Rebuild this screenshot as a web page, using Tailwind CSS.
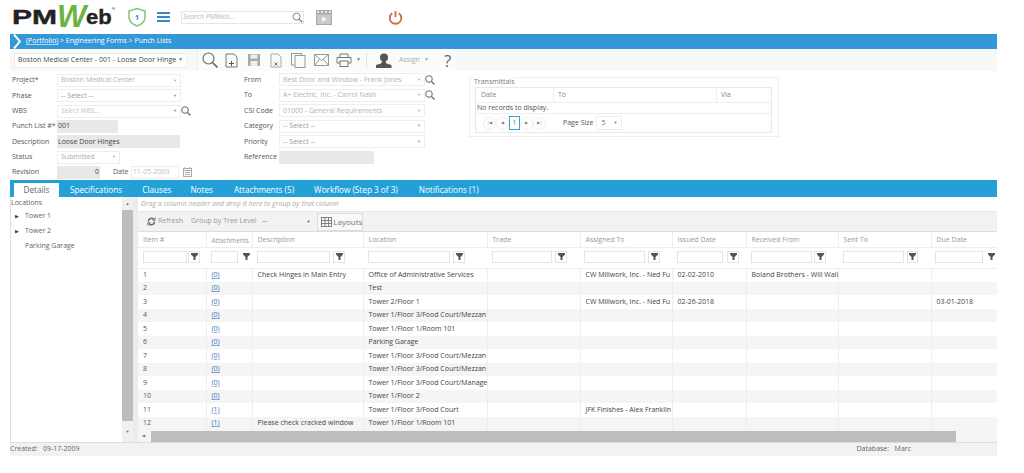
<!DOCTYPE html>
<html><head><meta charset="utf-8"><script src="https://cdn.jsdelivr.net/npm/@tailwindcss/browser@4"></script></head>
<body class="bg-white overflow-hidden font-['Open_Sans',sans-serif] text-[7px] text-[#555]">
<div class="w-[1024px] h-[473px] overflow-hidden">
<header class="h-[34px] flex items-center">
  <div class="ml-[12px] w-[100px] h-[24px] flex items-center font-['Liberation_Sans',sans-serif] font-bold text-[#222] leading-none relative whitespace-nowrap">
    <span class="text-[20px] scale-x-[1.5] origin-left w-[45px] shrink-0 [-webkit-text-stroke:0.4px_#222]">PM</span><span class="text-[31px] italic text-[#6cb33f] shrink-0 -mt-[1px]">W</span><span class="text-[20px] scale-x-[1.1] origin-left w-[26px] shrink-0 [-webkit-text-stroke:0.4px_#222]">eb</span><span class="absolute left-[100px] top-[2px] text-[4px]">®</span>
  </div>
  <svg class="ml-[15px] w-[20px] h-[20px]" viewBox="0 0 20 20"><path d="M10 1.5 L18 4 V10 C18 14.5 14 17.5 10 19 C6 17.5 2 14.5 2 10 V4 Z" fill="#fff" stroke="#7fc576" stroke-width="1.5"/><text x="10" y="12.5" text-anchor="middle" font-size="7" font-weight="700" fill="#2e86c8" font-family="Open Sans">1</text></svg>
  <div class="ml-[10px] w-[13px] flex flex-col gap-[2px]"><i class="block h-[2px] bg-[#3b87c8]"></i><i class="block h-[2px] bg-[#3b87c8]"></i><i class="block h-[2px] bg-[#3b87c8]"></i></div>
  <div class="ml-[11px] w-[123px] h-[13px] border border-[#e6e6e6] flex items-center pl-[1px] pr-[0px] justify-between italic text-[#b8b8b8]">Search PMWeb...
    <svg class="w-[11px] h-[11px]" viewBox="0 0 12 12" fill="none" stroke="#777" stroke-width="1"><circle cx="5" cy="5" r="3.8"/><path d="M8 8l3.2 3.2" stroke-width="1.4"/></svg>
  </div>
  <svg class="ml-[12px] w-[16px] h-[15px]" viewBox="0 0 16 15"><rect width="16" height="15" fill="#a9a9a9"/><path d="M1 1h2v2H1zM5 1h2v2H5zM9 1h2v2H9zM13 1h2v2h-2z" fill="#e8e8e8"/><rect x="1" y="4.5" width="14" height="9.5" fill="#c9c9c9"/><path d="M6 6.5l5 2.8-5 2.8z" fill="#f4f4f4"/></svg>
  <svg class="ml-[56px] w-[15px] h-[15px]" viewBox="0 0 15 15" fill="none" stroke="#cf6a4c" stroke-width="1.8"><path d="M4.2 3.2a5.8 5.8 0 1 0 6.6 0"/><path d="M7.5 1v6"/></svg>
</header>
<main class="ml-[10px] w-[987px]">
  <div class="h-[15px] bg-[#3498d8] flex items-center text-white font-medium text-[7px]">
    <svg class="ml-[3px] w-[8px] h-[15px]" viewBox="0 0 8 15" fill="none" stroke="#fff" stroke-width="2"><path d="M1 0.5l6 7-6 7"/></svg>
    <span class="ml-[5px]"><span class="underline decoration-white/60">(Portfolio)</span> &gt; Engineering Forms &gt; Punch Lists</span>
  </div>
  <div class="h-[22px] bg-[#f8f8f8] flex items-center">
    <div class="ml-[4px] w-[173px] h-[15px] bg-white border border-[#eeeeee] flex items-center pl-[3px] text-[#444] whitespace-nowrap justify-between"><span class="tracking-[0.05px]">Boston Medical Center - 001 - Loose Door Hinge</span><span class="mr-[3px] text-[#777] text-[5px]">▼</span></div>
    <div class="ml-[10px] w-[261px] h-[22px] bg-[#fbfbfb] border-x border-[#f0f0f0] flex items-center text-[#aaa]">
      <svg class="ml-[4px] w-[16px] h-[16px]" viewBox="0 0 16 16" fill="none" stroke="#666" stroke-width="1.1"><circle cx="6.5" cy="6.5" r="5.5"/><path d="M10.5 10.5l5 5" stroke-width="1.6"/></svg>
      <svg class="ml-[7px] w-[13px] h-[15px]" viewBox="0 0 13 15" fill="none" stroke="#777"><path d="M1 1h8l3 3v10H1z"/><path d="M6.5 8v5M4 10.5h5" stroke="#555"/></svg>
      <svg class="ml-[9px] w-[14px] h-[14px]" viewBox="0 0 14 14" fill="#aaa"><path d="M1 1h12v12H1z"/><path d="M3.5 1.5h7v4h-7zM3.5 8h7v5h-7z" fill="#eee"/></svg>
      <svg class="ml-[9px] w-[12px] h-[15px]" viewBox="0 0 12 15" fill="none" stroke="#aaa"><path d="M1 1h7l3 3v10H1z"/><path d="M4.5 9.5l3 3m0-3l-3 3" stroke="#777"/></svg>
      <svg class="ml-[9px] w-[15px] h-[15px]" viewBox="0 0 15 15" fill="#fbfbfb" stroke="#999"><rect x="0.5" y="0.5" width="10" height="11.5"/><rect x="4" y="2.5" width="10" height="12"/></svg>
      <svg class="ml-[8px] w-[15px] h-[12px]" viewBox="0 0 15 12" fill="none" stroke="#999"><rect x="0.5" y="0.5" width="14" height="11"/><path d="M0.5 0.5l7 6 7-6M0.5 11.5l5-6.2M14.5 11.5l-5-6.2"/></svg>
      <svg class="ml-[7px] w-[16px] h-[14px]" viewBox="0 0 16 14" fill="none" stroke="#777"><path d="M4 4V1h8v3M4 10H1V4.5h14V10h-3"/><rect x="4" y="8" width="8" height="5.5"/></svg>
      <span class="ml-[4px] text-[#777] text-[5px]">▼</span>
      <i class="ml-[5px] block w-px h-[16px] bg-[#e4e4e4]"></i>
      <svg class="ml-[9px] w-[16px] h-[15px]" viewBox="0 0 16 15" fill="#555"><circle cx="8" cy="4.5" r="4"/><path d="M6.5 8h3l1 2.5 5 1.5v3H0v-3l5-1.5z"/></svg>
      <span class="ml-[7px]">Assign</span><span class="ml-[4px] text-[5px]">▼</span>
      <span class="ml-[15px] text-[17px] leading-none text-[#666]">?</span>
    </div>
  </div>
  <section class="h-[109px] flex relative">
    <div class="w-[234px] pt-[2px] text-[#555]">
      <div class="h-[15.3px] flex items-center pl-[2px]"><span class="w-[45px]">Project*</span><div class="w-[124px] h-[13px] border border-[#eeeeee] flex justify-between items-center pl-[3px] pr-[3px] text-[#b3b3b3]">Boston Medical Center<span class="text-[4px]">▼</span></div></div>
      <div class="h-[15.3px] flex items-center pl-[2px]"><span class="w-[45px]">Phase</span><div class="w-[124px] h-[13px] border border-[#eeeeee] flex justify-between items-center pl-[3px] pr-[3px] text-[#999]">-- Select --<span class="text-[4px]">▼</span></div></div>
      <div class="h-[15.3px] flex items-center pl-[2px]"><span class="w-[45px]">WBS</span><div class="w-[124px] h-[13px] border border-[#eeeeee] flex justify-between items-center pl-[3px] pr-[3px] text-[#c4c4c4] italic">Select WBS...<span class="text-[4px] not-italic text-[#888]">▼</span></div>
        <svg class="w-[10px] h-[10px]" viewBox="0 0 10 10" fill="none" stroke="#666"><circle cx="4" cy="4" r="3.3"/><path d="M6.5 6.5l3 3" stroke-width="1.3"/></svg></div>
      <div class="h-[15.3px] flex items-center pl-[2px]"><span class="w-[45px]">Punch List #*</span><div class="w-[61px] h-[13px] bg-[#e8e8e8] pl-[1px] flex items-center text-[#444]">001</div></div>
      <div class="h-[15.3px] flex items-center pl-[2px]"><span class="w-[45px]">Description</span><div class="w-[123px] h-[13px] bg-[#e8e8e8] pl-[1px] flex items-center text-[#444]">Loose Door Hinges</div></div>
      <div class="h-[15.3px] flex items-center pl-[2px]"><span class="w-[45px]">Status</span><div class="w-[63px] h-[13px] border border-[#eeeeee] flex justify-between items-center pl-[3px] pr-[3px] text-[#aaa]">Submitted<span class="text-[4px]">▼</span></div></div>
      <div class="h-[15.3px] flex items-center pl-[2px]"><span class="w-[45px]">Revision</span><div class="w-[43px] h-[13px] bg-[#e8e8e8] pr-[1px] flex items-center justify-end text-[#444]">0</div><span class="ml-[13px] w-[18px]">Date</span><div class="w-[48px] h-[13px] border border-[#eeeeee] pl-[1px] flex items-center text-[#c0c0c0]">11-05-2009</div>
        <svg class="ml-[4px] w-[9px] h-[10px]" viewBox="0 0 9 10" fill="none" stroke="#aaa"><rect x="0.5" y="1.5" width="8" height="8"/><path d="M0.5 3.5h8M2 0v2M7 0v2M2 5.5h5M2 7.5h5" /></svg></div>
    </div>
    <div class="w-[225px] pt-[1px] text-[#555]">
      <div class="h-[15.5px] flex items-center"><span class="w-[35px]">From</span><div class="w-[146px] h-[13px] border border-[#eeeeee] flex justify-between items-center pl-[3px] pr-[3px] text-[#b3b3b3]">Best Door and Window - Frank Jones<span class="text-[4px]">▼</span></div>
        <svg class="w-[10px] h-[10px]" viewBox="0 0 10 10" fill="none" stroke="#666"><circle cx="4" cy="4" r="3.3"/><path d="M6.5 6.5l3 3" stroke-width="1.3"/></svg></div>
      <div class="h-[15.5px] flex items-center"><span class="w-[35px]">To</span><div class="w-[146px] h-[13px] border border-[#eeeeee] flex justify-between items-center pl-[3px] pr-[3px] text-[#b3b3b3]">A+ Electric, Inc. - Carrol Nash<span class="text-[4px]">▼</span></div>
        <svg class="w-[10px] h-[10px]" viewBox="0 0 10 10" fill="none" stroke="#666"><circle cx="4" cy="4" r="3.3"/><path d="M6.5 6.5l3 3" stroke-width="1.3"/></svg></div>
      <div class="h-[15.5px] flex items-center"><span class="w-[35px]">CSI Code</span><div class="w-[146px] h-[13px] border border-[#eeeeee] flex justify-between items-center pl-[3px] pr-[3px] text-[#b3b3b3]">01000 - General Requirements<span class="text-[4px]">▼</span></div></div>
      <div class="h-[15.5px] flex items-center"><span class="w-[35px]">Category</span><div class="w-[146px] h-[13px] border border-[#eeeeee] flex justify-between items-center pl-[3px] pr-[3px] text-[#999]">-- Select --<span class="text-[4px]">▼</span></div></div>
      <div class="h-[15.5px] flex items-center"><span class="w-[35px]">Priority</span><div class="w-[146px] h-[13px] border border-[#eeeeee] flex justify-between items-center pl-[3px] pr-[3px] text-[#999]">-- Select --<span class="text-[4px]">▼</span></div></div>
      <div class="h-[15.5px] flex items-center"><span class="w-[35px]">Reference</span><div class="w-[95px] h-[13px] bg-[#e8e8e8]"></div></div>
    </div>
    <div class="mt-[6px] w-[310px] h-[60px] border border-[#eeeeee] relative px-[5px] pt-[9px]">
      <span class="absolute left-[4px] -top-[1px] bg-white text-[#777] leading-[9px]">Transmittals</span>
      <div class="w-[297px] h-[46px] border border-[#e8e8e8] flex flex-col">
        <div class="h-[15px] flex items-center border-b border-[#eeeeee] text-[#888]"><span class="w-[78px] pl-[5px] border-r border-[#eeeeee] leading-[14px]">Date</span><span class="w-[163px] pl-[4px] border-r border-[#eeeeee] leading-[14px]">To</span><span class="pl-[4px]">Via</span></div>
        <div class="h-[11px] flex items-center border-b border-[#eeeeee] pl-[1px]">No records to display.</div>
        <div class="flex-1 flex items-center pl-[7px] text-[#777]">
          <span class="w-[13px] h-[13px] rounded-full border border-[#eeeeee] flex items-center justify-center text-[4px]">|◀</span>
          <span class="w-[13px] h-[13px] rounded-full border border-[#eeeeee] flex items-center justify-center text-[4px]">◀</span>
          <span class="w-[11px] h-[14px] border border-[#3aa0d8] flex items-center justify-center">1</span>
          <span class="w-[13px] h-[13px] rounded-full border border-[#eeeeee] flex items-center justify-center text-[4px]">▶</span>
          <span class="w-[13px] h-[13px] rounded-full border border-[#eeeeee] flex items-center justify-center text-[4px]">▶|</span>
          <span class="ml-[17px] text-[#555]">Page Size</span>
          <div class="ml-[3px] w-[26px] h-[14px] border border-[#eeeeee] flex justify-between items-center px-[4px]">5<span class="text-[4px]">▼</span></div>
        </div>
      </div>
    </div>
  </section>
  <nav class="h-[17px] bg-[#23a0d8] flex items-end text-[8.2px] text-white whitespace-nowrap">
    <span class="ml-[4px] w-[45px] h-[14px] bg-white text-[#666] flex items-center justify-center">Details</span>
    <span class="ml-[11px] h-[14px] flex items-center">Specifications</span>
    <span class="ml-[20px] h-[14px] flex items-center">Clauses</span>
    <span class="ml-[19px] h-[14px] flex items-center">Notes</span>
    <span class="ml-[21px] h-[14px] flex items-center">Attachments (5)</span>
    <span class="ml-[20px] h-[14px] flex items-center">Workflow (Step 3 of 3)</span>
    <span class="ml-[21px] h-[14px] flex items-center">Notifications (1)</span>
  </nav>
  <div class="h-[246px] flex border-b border-[#dddddd]">
    <aside class="w-[112px] border-l border-[#e0e0e0] text-[#666]">
      <div class="h-[12px] pt-[1px] flex items-center">Locations</div>
      <div class="h-[15px] flex items-center pl-[4px]"><span class="text-[5px] w-[10px] text-[#444]">▶</span>Tower 1</div>
      <div class="h-[15px] flex items-center pl-[4px]"><span class="text-[5px] w-[10px] text-[#444]">▶</span>Tower 2</div>
      <div class="h-[15px] flex items-center pl-[14px]">Parking Garage</div>
    </aside>
    <div class="w-[11px] bg-[#f0f0f0] flex flex-col items-center text-[#666] text-[4px]">
      <span class="h-[13px] flex items-center">▲</span>
      <div class="w-full h-[211px] bg-[#bdbdbd]"></div>
      <span class="flex-1 flex items-center">▼</span>
    </div>
    <div class="w-[5px] bg-[#ececec]"></div>
    <div class="w-[859px] overflow-hidden">
      <div class="h-[15px] pt-[1px] flex items-center italic text-[#aaa] pl-[3px] border-b border-[#e8e8e8]">Drag a column header and drop it here to group by that column</div>
      <div class="h-[20px] bg-[#f2f2f2] border-b border-[#dddddd] flex items-center text-[#999]">
        <svg class="ml-[9px] w-[9px] h-[9px]" viewBox="0 0 10 10" fill="none" stroke="#666" stroke-width="1.6"><path d="M1.5 5a3.6 3.6 0 0 1 6.4-2.2M8.5 5a3.6 3.6 0 0 1-6.4 2.2"/><path d="M9 0.5v3H6M1 9.5v-3h3" stroke-width="1"/></svg>
        <span class="ml-[2px]">Refresh</span>
        <span class="ml-[8px] font-medium">Group by Tree Level</span>
        <div class="ml-[2px] w-[55px] h-[14px] flex justify-between items-center pl-[4px] pr-[3px] text-[#555]">--<span class="text-[4px]">▼</span></div>
        <div class="ml-[4px] w-[46px] h-[18px] bg-[#f8f8f8] border border-[#dddddd] flex items-center pl-[3px] text-[8px] text-[#777] self-end">
          <svg class="w-[11px] h-[10px] mr-[1px]" viewBox="0 0 11 10" fill="none" stroke="#666" stroke-width="0.8"><rect x="0.5" y="0.5" width="10" height="9"/><path d="M0.5 3.5h10M0.5 6.5h10M4 0.5v9M7.5 0.5v9"/></svg>Layouts</div>
      </div>
      <table class="table-fixed border-collapse w-[859px] whitespace-nowrap">
        <colgroup><col class="w-[68px]"><col class="w-[46px]"><col class="w-[111px]"><col class="w-[124px]"><col class="w-[93px]"><col class="w-[92px]"><col class="w-[74px]"><col class="w-[92px]"><col class="w-[93px]"><col class="w-[66px]"></colgroup>
        <thead class="text-[#999] font-normal">
          <tr class="h-[15px] border-b border-[#eeeeee] text-left"><th class="font-normal pl-[5px] pt-[2px] border-r border-[#eeeeee]">Item #</th><th class="font-normal pl-[5px] pt-[2px] border-r border-[#eeeeee] text-[6.3px]">Attachments</th><th class="font-normal pl-[5px] pt-[2px] border-r border-[#eeeeee]">Description</th><th class="font-normal pl-[5px] pt-[2px] border-r border-[#eeeeee]">Location</th><th class="font-normal pl-[5px] pt-[2px] border-r border-[#eeeeee]">Trade</th><th class="font-normal pl-[5px] pt-[2px] border-r border-[#eeeeee]">Assigned To</th><th class="font-normal pl-[5px] pt-[2px] border-r border-[#eeeeee]">Issued Date</th><th class="font-normal pl-[5px] pt-[2px] border-r border-[#eeeeee]">Received From</th><th class="font-normal pl-[5px] pt-[2px] border-r border-[#eeeeee]">Sent To</th><th class="font-normal pl-[5px] pt-[2px]">Due Date</th></tr>
        </thead>
        <tbody>
          <tr class="h-[21px] border-b border-[#eeeeee]">
            <td class="pl-[5px]"><div class="flex items-center -mt-[2px]"><i class="block w-[44px] h-[12px] border border-[#e4e4e4]"></i><b class="ml-[1px] w-[12px] h-[12px] border border-[#e4e4e4] flex items-center justify-center"><svg class="w-[7px] h-[7px]" viewBox="0 0 7 7" fill="#555"><path d="M0 0h7v1.5L4.5 4v3h-2V4L0 1.5z"/></svg></b></div></td>
            <td class="pl-[5px]"><div class="flex items-center -mt-[2px]"><i class="block w-[28px] h-[12px] border border-[#e4e4e4]"></i><b class="ml-[3px] w-[11px] h-[12px] flex items-center justify-center"><svg class="w-[7px] h-[7px]" viewBox="0 0 7 7" fill="#555"><path d="M0 0h7v1.5L4.5 4v3h-2V4L0 1.5z"/></svg></b></div></td>
            <td class="pl-[5px]"><div class="flex items-center -mt-[2px]"><i class="block w-[73px] h-[12px] border border-[#e4e4e4]"></i><b class="ml-[3px] w-[12px] h-[12px] border border-[#e4e4e4] flex items-center justify-center"><svg class="w-[7px] h-[7px]" viewBox="0 0 7 7" fill="#555"><path d="M0 0h7v1.5L4.5 4v3h-2V4L0 1.5z"/></svg></b></div></td>
            <td class="pl-[5px]"><div class="flex items-center -mt-[2px]"><i class="block w-[82px] h-[12px] border border-[#e4e4e4]"></i><b class="ml-[3px] w-[12px] h-[12px] border border-[#e4e4e4] flex items-center justify-center"><svg class="w-[7px] h-[7px]" viewBox="0 0 7 7" fill="#555"><path d="M0 0h7v1.5L4.5 4v3h-2V4L0 1.5z"/></svg></b></div></td>
            <td class="pl-[5px]"><div class="flex items-center -mt-[2px]"><i class="block w-[60px] h-[12px] border border-[#e4e4e4]"></i><b class="ml-[3px] w-[12px] h-[12px] border border-[#e4e4e4] flex items-center justify-center"><svg class="w-[7px] h-[7px]" viewBox="0 0 7 7" fill="#555"><path d="M0 0h7v1.5L4.5 4v3h-2V4L0 1.5z"/></svg></b></div></td>
            <td class="pl-[4px]"><div class="flex items-center -mt-[2px]"><i class="block w-[61px] h-[12px] border border-[#e4e4e4]"></i><b class="ml-[3px] w-[12px] h-[12px] border border-[#e4e4e4] flex items-center justify-center"><svg class="w-[7px] h-[7px]" viewBox="0 0 7 7" fill="#555"><path d="M0 0h7v1.5L4.5 4v3h-2V4L0 1.5z"/></svg></b></div></td>
            <td class="pl-[5px]"><div class="flex items-center -mt-[2px]"><i class="block w-[46px] h-[12px] border border-[#e4e4e4]"></i><b class="ml-[4px] w-[12px] h-[12px] border border-[#e4e4e4] flex items-center justify-center"><svg class="w-[7px] h-[7px]" viewBox="0 0 7 7" fill="#555"><path d="M0 0h7v1.5L4.5 4v3h-2V4L0 1.5z"/></svg></b></div></td>
            <td class="pl-[5px]"><div class="flex items-center -mt-[2px]"><i class="block w-[61px] h-[12px] border border-[#e4e4e4]"></i><b class="ml-[2px] w-[12px] h-[12px] border border-[#e4e4e4] flex items-center justify-center"><svg class="w-[7px] h-[7px]" viewBox="0 0 7 7" fill="#555"><path d="M0 0h7v1.5L4.5 4v3h-2V4L0 1.5z"/></svg></b></div></td>
            <td class="pl-[5px]"><div class="flex items-center -mt-[2px]"><i class="block w-[61px] h-[12px] border border-[#e4e4e4]"></i><b class="ml-[3px] w-[11px] h-[12px] border border-[#e4e4e4] flex items-center justify-center"><svg class="w-[7px] h-[7px]" viewBox="0 0 7 7" fill="#555"><path d="M0 0h7v1.5L4.5 4v3h-2V4L0 1.5z"/></svg></b></div></td>
            <td class="pl-[4px]"><div class="flex items-center -mt-[2px]"><i class="block w-[48px] h-[12px] border border-[#e4e4e4]"></i><b class="ml-[3px] w-[11px] h-[12px] flex items-center justify-center"><svg class="w-[7px] h-[7px]" viewBox="0 0 7 7" fill="#555"><path d="M0 0h7v1.5L4.5 4v3h-2V4L0 1.5z"/></svg></b></div></td>
          </tr>
          <tr class="h-[13.5px]"><td class="pl-[5px] border-r border-[#eeeeee]">1</td><td class="pl-[5px] border-r border-[#eeeeee] text-[#3b6fc0] underline decoration-[#3b6fc0]/60">(0)</td><td class="pl-[5px] border-r border-[#eeeeee] text-[#444]">Check Hinges in Main Entry</td><td class="pl-[5px] border-r border-[#eeeeee] text-[#444]">Office of Administrative Services</td><td class="border-r border-[#eeeeee]"></td><td class="pl-[5px] border-r border-[#eeeeee] text-[#444]">CW Millwork, Inc. - Ned Fu</td><td class="pl-[5px] border-r border-[#eeeeee] text-[#444]">02-02-2010</td><td class="pl-[5px] border-r border-[#eeeeee] text-[#444]">Boland Brothers - Will Wali</td><td class="border-r border-[#eeeeee]"></td><td></td></tr>
          <tr class="h-[13.5px] bg-[#f5f5f5]"><td class="pl-[5px] border-r border-[#eeeeee]">2</td><td class="pl-[5px] border-r border-[#eeeeee] text-[#3b6fc0] underline decoration-[#3b6fc0]/60">(0)</td><td class="border-r border-[#eeeeee]"></td><td class="pl-[5px] border-r border-[#eeeeee] text-[#444]">Test</td><td class="border-r border-[#eeeeee]"></td><td class="border-r border-[#eeeeee]"></td><td class="border-r border-[#eeeeee]"></td><td class="border-r border-[#eeeeee]"></td><td class="border-r border-[#eeeeee]"></td><td></td></tr>
          <tr class="h-[13.5px]"><td class="pl-[5px] border-r border-[#eeeeee]">3</td><td class="pl-[5px] border-r border-[#eeeeee] text-[#3b6fc0] underline decoration-[#3b6fc0]/60">(0)</td><td class="border-r border-[#eeeeee]"></td><td class="pl-[5px] border-r border-[#eeeeee] text-[#444]">Tower 2/Floor 1</td><td class="border-r border-[#eeeeee]"></td><td class="pl-[5px] border-r border-[#eeeeee] text-[#444]">CW Millwork, Inc. - Ned Fu</td><td class="pl-[5px] border-r border-[#eeeeee] text-[#444]">02-26-2018</td><td class="border-r border-[#eeeeee]"></td><td class="border-r border-[#eeeeee]"></td><td class="pl-[5px] text-[#444]">03-01-2018</td></tr>
          <tr class="h-[13.5px] bg-[#f5f5f5]"><td class="pl-[5px] border-r border-[#eeeeee]">4</td><td class="pl-[5px] border-r border-[#eeeeee] text-[#3b6fc0] underline decoration-[#3b6fc0]/60">(0)</td><td class="border-r border-[#eeeeee]"></td><td class="pl-[5px] border-r border-[#eeeeee] text-[#444]">Tower 1/Floor 3/Food Court/Mezzan</td><td class="border-r border-[#eeeeee]"></td><td class="border-r border-[#eeeeee]"></td><td class="border-r border-[#eeeeee]"></td><td class="border-r border-[#eeeeee]"></td><td class="border-r border-[#eeeeee]"></td><td></td></tr>
          <tr class="h-[13.5px]"><td class="pl-[5px] border-r border-[#eeeeee]">5</td><td class="pl-[5px] border-r border-[#eeeeee] text-[#3b6fc0] underline decoration-[#3b6fc0]/60">(0)</td><td class="border-r border-[#eeeeee]"></td><td class="pl-[5px] border-r border-[#eeeeee] text-[#444]">Tower 1/Floor 1/Room 101</td><td class="border-r border-[#eeeeee]"></td><td class="border-r border-[#eeeeee]"></td><td class="border-r border-[#eeeeee]"></td><td class="border-r border-[#eeeeee]"></td><td class="border-r border-[#eeeeee]"></td><td></td></tr>
          <tr class="h-[13.5px] bg-[#f5f5f5]"><td class="pl-[5px] border-r border-[#eeeeee]">6</td><td class="pl-[5px] border-r border-[#eeeeee] text-[#3b6fc0] underline decoration-[#3b6fc0]/60">(0)</td><td class="border-r border-[#eeeeee]"></td><td class="pl-[5px] border-r border-[#eeeeee] text-[#444]">Parking Garage</td><td class="border-r border-[#eeeeee]"></td><td class="border-r border-[#eeeeee]"></td><td class="border-r border-[#eeeeee]"></td><td class="border-r border-[#eeeeee]"></td><td class="border-r border-[#eeeeee]"></td><td></td></tr>
          <tr class="h-[13.5px]"><td class="pl-[5px] border-r border-[#eeeeee]">7</td><td class="pl-[5px] border-r border-[#eeeeee] text-[#3b6fc0] underline decoration-[#3b6fc0]/60">(0)</td><td class="border-r border-[#eeeeee]"></td><td class="pl-[5px] border-r border-[#eeeeee] text-[#444]">Tower 1/Floor 3/Food Court/Mezzan</td><td class="border-r border-[#eeeeee]"></td><td class="border-r border-[#eeeeee]"></td><td class="border-r border-[#eeeeee]"></td><td class="border-r border-[#eeeeee]"></td><td class="border-r border-[#eeeeee]"></td><td></td></tr>
          <tr class="h-[13.5px] bg-[#f5f5f5]"><td class="pl-[5px] border-r border-[#eeeeee]">8</td><td class="pl-[5px] border-r border-[#eeeeee] text-[#3b6fc0] underline decoration-[#3b6fc0]/60">(0)</td><td class="border-r border-[#eeeeee]"></td><td class="pl-[5px] border-r border-[#eeeeee] text-[#444]">Tower 1/Floor 3/Food Court/Mezzan</td><td class="border-r border-[#eeeeee]"></td><td class="border-r border-[#eeeeee]"></td><td class="border-r border-[#eeeeee]"></td><td class="border-r border-[#eeeeee]"></td><td class="border-r border-[#eeeeee]"></td><td></td></tr>
          <tr class="h-[13.5px]"><td class="pl-[5px] border-r border-[#eeeeee]">9</td><td class="pl-[5px] border-r border-[#eeeeee] text-[#3b6fc0] underline decoration-[#3b6fc0]/60">(0)</td><td class="border-r border-[#eeeeee]"></td><td class="pl-[5px] border-r border-[#eeeeee] text-[#444]">Tower 1/Floor 3/Food Court/Manage</td><td class="border-r border-[#eeeeee]"></td><td class="border-r border-[#eeeeee]"></td><td class="border-r border-[#eeeeee]"></td><td class="border-r border-[#eeeeee]"></td><td class="border-r border-[#eeeeee]"></td><td></td></tr>
          <tr class="h-[13.5px] bg-[#f5f5f5]"><td class="pl-[5px] border-r border-[#eeeeee]">10</td><td class="pl-[5px] border-r border-[#eeeeee] text-[#3b6fc0] underline decoration-[#3b6fc0]/60">(0)</td><td class="border-r border-[#eeeeee]"></td><td class="pl-[5px] border-r border-[#eeeeee] text-[#444]">Tower 1/Floor 2</td><td class="border-r border-[#eeeeee]"></td><td class="border-r border-[#eeeeee]"></td><td class="border-r border-[#eeeeee]"></td><td class="border-r border-[#eeeeee]"></td><td class="border-r border-[#eeeeee]"></td><td></td></tr>
          <tr class="h-[13.5px]"><td class="pl-[5px] border-r border-[#eeeeee]">11</td><td class="pl-[5px] border-r border-[#eeeeee] text-[#3b6fc0] underline decoration-[#3b6fc0]/60">(1)</td><td class="border-r border-[#eeeeee]"></td><td class="pl-[5px] border-r border-[#eeeeee] text-[#444]">Tower 1/Floor 3/Food Court</td><td class="border-r border-[#eeeeee]"></td><td class="pl-[5px] border-r border-[#eeeeee] text-[#444]">JFK Finishes - Alex Franklin</td><td class="border-r border-[#eeeeee]"></td><td class="border-r border-[#eeeeee]"></td><td class="border-r border-[#eeeeee]"></td><td></td></tr>
          <tr class="h-[13.5px] bg-[#f5f5f5]"><td class="pl-[5px] border-r border-[#eeeeee]">12</td><td class="pl-[5px] border-r border-[#eeeeee] text-[#3b6fc0] underline decoration-[#3b6fc0]/60">(1)</td><td class="pl-[5px] border-r border-[#eeeeee] text-[#444]">Please check cracked window</td><td class="pl-[5px] border-r border-[#eeeeee] text-[#444]">Tower 1/Floor 1/Room 101</td><td class="border-r border-[#eeeeee]"></td><td class="border-r border-[#eeeeee]"></td><td class="border-r border-[#eeeeee]"></td><td class="border-r border-[#eeeeee]"></td><td class="border-r border-[#eeeeee]"></td><td></td></tr>
        </tbody>
      </table>
      <div class="h-[12px] bg-[#f4f4f4] flex items-center text-[4px] text-[#777]"><span class="w-[13px] pl-[4px]">◀</span><div class="w-[805px] h-[11px] bg-[#bdbdbd]"></div></div>
    </div>
  </div>
  <footer class="h-[13px] bg-[#f2f2f2] flex items-center justify-between text-[#666]">
    <span>Created: &nbsp; 09-17-2009</span>
    <span class="mr-[86px]">Database: &nbsp; Marc</span>
  </footer>
</main>
</div>
</body></html>
